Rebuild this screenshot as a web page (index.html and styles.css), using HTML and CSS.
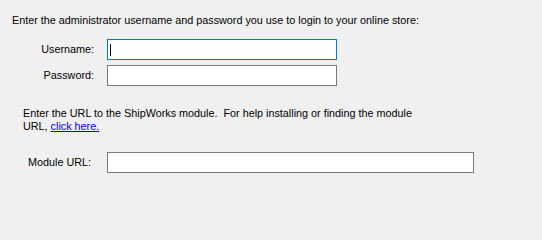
FILE: index.html
```html
<!DOCTYPE html>
<html>
<head>
<meta charset="utf-8">
<link rel="stylesheet" href="styles.css">
</head>
<body>
<div class="page">
  <p class="intro">Enter the administrator username and password you use to login to your online store:</p>
  <div class="fields">
    <div class="row">
      <span class="label">Username:</span>
      <div class="box box-focus"><span class="caret"></span></div>
    </div>
    <div class="row">
      <span class="label">Password:</span>
      <div class="box"></div>
    </div>
  </div>
  <p class="help">Enter the URL to the ShipWorks module.&nbsp; For help installing or finding the module<br>URL, <a class="link" href="#">click here.</a></p>
  <div class="row module-row">
    <span class="label module-label">Module URL:</span>
    <div class="box box-wide"></div>
  </div>
</div>
</body>
</html>
```
FILE: styles.css
```css
html, body {
  margin: 0;
  padding: 0;
  background: #f0f0f0;
}
body {
  font-family: "Liberation Sans", Arial, sans-serif;
  font-size: 10.8px;
  line-height: 13px;
  color: #000;
}
.page {
  width: 542px;
  height: 222px;
  padding-top: 14px;
  box-sizing: border-box;
}
.intro {
  margin: 0 0 0 12px;
}
.fields {
  display: flex;
  flex-direction: column;
  gap: 5px;
  margin-top: 12px;
}
.row {
  display: flex;
  align-items: center;
}
.label {
  width: 94px;
  text-align: right;
  margin-right: 13px;
}
.box {
  width: 230px;
  height: 21px;
  box-sizing: border-box;
  background: #fff;
  border: 1px solid #7a7a7a;
  display: flex;
  align-items: center;
  padding-left: 2px;
}
.box-focus {
  border-color: #0078d7;
}
.caret {
  width: 1px;
  height: 12px;
  background: #000;
}
.help {
  margin: 21px 0 0 23px;
}
.link {
  color: #0000ff;
  text-decoration: underline;
}
.module-row {
  margin-top: 19px;
}
.module-label {
  width: 91px;
  margin-right: 16px;
}
.box-wide {
  width: 367px;
}
```
